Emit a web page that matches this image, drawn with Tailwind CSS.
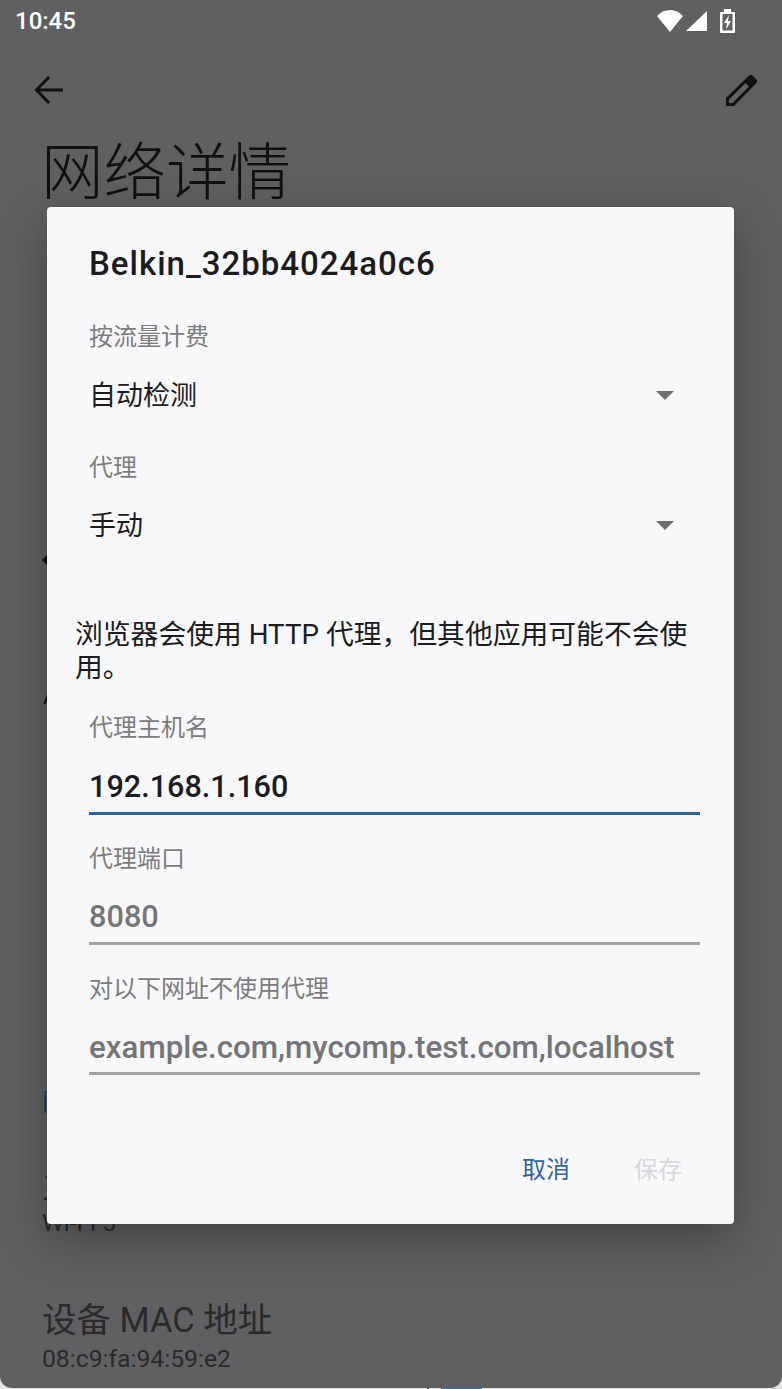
<!DOCTYPE html>
<html lang="zh-CN">
<head>
  <meta charset="UTF-8">
  <meta name="viewport" content="width=device-width, initial-scale=1.0">
  <title>网络详情</title>
  <script src="https://cdn.jsdelivr.net/npm/@tailwindcss/browser@4"></script>
</head>
<body class="bg-[#e4e4e6] font-['Roboto','Noto_Sans_CJK_SC',sans-serif]">
  <div class="relative w-[782px] h-[1389px] overflow-hidden">
    <!-- strip of the next screen under the rounded corners -->
    <div class="absolute left-[427px] bottom-0 w-[2px] h-[2px] bg-[#222]"></div>
    <div class="absolute left-[441px] bottom-0 w-[41px] h-[2px] bg-[#3f6f9f]"></div>
    <div class="relative h-[1388px] overflow-hidden rounded-b-[12px] bg-[#606062]">
      <!-- status bar -->
      <div class="flex items-center justify-between h-[42px] pl-[15px] pr-[47px]">
        <span class="text-[24px] leading-[42px] text-white font-medium">10:45</span>
        <div class="flex items-center">
          <svg width="26" height="24" viewBox="0 0 26 24"><path d="M0 7C3.500 3 8 1 13 1S22.500 3 26 7L13 23Z" fill="#fff"/></svg>
          <svg class="ml-[3px]" width="21" height="24" viewBox="0 0 21 24"><path d="M0 22 21 2V22Z" fill="#fff"/></svg>
          <svg class="ml-[13px]" width="15" height="24" viewBox="0 0 15 24"><path fill-rule="evenodd" d="M4 0h7v3h3a1 1 0 0 1 1 1v19a1 1 0 0 1-1 1H1a1 1 0 0 1-1-1V4a1 1 0 0 1 1-1h3ZM2.500 5v16.500h10V5Z" fill="#fff"/><path d="M9 6 4 14h3L6 20.500 11 12H8Z" fill="#fff"/></svg>
        </div>
      </div>
      <!-- toolbar -->
      <div class="flex items-center justify-between h-[96px] pl-[33px] pr-[23px]">
        <svg width="32" height="32" viewBox="0 0 32 32" fill="none" stroke="#111" stroke-width="3"><path d="M30 16H4M16 3 3.500 16 16 29"/></svg>
        <svg width="34" height="34" viewBox="0 0 34 34"><path fill-rule="evenodd" d="M1 33V25L24 2.500a2.500 2.500 0 0 1 3.500 0l4 4a2.500 2.500 0 0 1 0 3.500L9 33ZM4 30h3.500L24 13.500 20.500 10 4 26.500Z" fill="#111"/></svg>
      </div>
      <h1 class="pl-[41px] pt-[1px] text-[62.500px] leading-[70px] text-[#111] font-light">网络详情</h1>

      <!-- rest of the page behind the scrim -->
      <div class="absolute left-[42px] top-[1296px] text-[#2a2a2c]">
        <div class="text-[34.500px] leading-[48px]">设备 MAC 地址</div>
        <div class="text-[24.700px] leading-[30px]">08:c9:fa:94:59:e2</div>
      </div>
      <div class="absolute left-[42px] top-[1208px] text-[24.500px] leading-[30px] text-[#2a2a2c]">Wi-Fi 5</div>
      <div class="absolute left-[42px] top-[1166px] text-[34.500px] leading-[40px] text-[#2a2a2c]">主</div>
      <div class="absolute left-[42px] top-[1086px] text-[24px] leading-[32px] text-[#1d3f66]">网</div>
      <div class="absolute left-[44px] top-[555px] w-[10px] h-[10px] rotate-45 bg-[#111]"></div>
      <div class="absolute left-[43px] top-[684px] text-[24px] leading-[24px] text-[#111]">A</div>

      <!-- dialog -->
      <div class="absolute left-[47px] top-[207px] w-[687px] h-[1017px] rounded-[4px] bg-[#f8f8fb] shadow-[0_16px_48px_rgba(0,0,0,0.3)]">
        <h2 class="pl-[42px] pt-[37px] text-[33px] leading-[40px] tracking-[1px] font-medium text-[#1c1c1e]">Belkin_32bb4024a0c6</h2>

        <div class="pl-[42px] pr-[34px] mt-[37px]">
          <div class="text-[24px] leading-[32px] text-[#7c7c7e]">按流量计费</div>
          <div class="flex items-center justify-between h-[66px] mt-[10px] pr-[26px]">
            <span class="text-[27px] text-[#1c1c1e]">自动检测</span>
            <span class="w-0 h-0 mb-[2px] border-x-[9px] border-x-transparent border-t-[9px] border-t-[#6f6f71]"></span>
          </div>
          <div class="text-[24px] leading-[32px] text-[#7c7c7e] mt-[23px]">代理</div>
          <div class="flex items-center justify-between h-[66px] mt-[9px] pr-[26px]">
            <span class="text-[27px] text-[#1c1c1e]">手动</span>
            <span class="w-0 h-0 mb-[2px] border-x-[9px] border-x-transparent border-t-[9px] border-t-[#6f6f71]"></span>
          </div>
        </div>

        <p class="pl-[28px] pr-[40px] mt-[59px] text-[27.800px] leading-[33px] text-[#1c1c1e]">浏览器会使用 HTTP 代理，但其他应用可能不会使用。</p>

        <div class="pl-[42px] pr-[34px] mt-[28px]">
          <div class="text-[24px] leading-[32px] text-[#7c7c7e]">代理主机名</div>
          <div class="h-[56px] mt-[15px] border-b-[3px] border-[#2f659f] text-[30.600px] leading-[56px] font-medium text-[#1c1c1e]">192.168.1.160</div>
          <div class="text-[24px] leading-[32px] text-[#7c7c7e] mt-[28px]">代理端口</div>
          <div class="h-[57px] mt-[13px] border-b-[3px] border-[#a3a3a5] text-[30.700px] leading-[58px] font-medium text-[#757577]">8080</div>
          <div class="text-[24px] leading-[32px] text-[#7c7c7e] mt-[28px]">对以下网址不使用代理</div>
          <div class="h-[57px] mt-[13px] border-b-[3px] border-[#a3a3a5] text-[31.300px] leading-[59px] font-medium text-[#757577]">example.com,mycomp.test.com,localhost</div>
        </div>

        <div class="absolute right-[52px] bottom-[36px] flex gap-[64px] text-[24px] leading-[36px]">
          <span class="text-[#2f659f]">取消</span>
          <span class="text-[#d8d8da]">保存</span>
        </div>
      </div>
    </div>
  </div>
</body>
</html>
